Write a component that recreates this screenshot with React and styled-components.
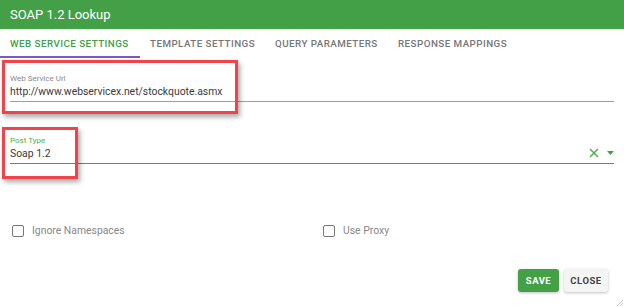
import React from "react";
import styled, { createGlobalStyle } from "styled-components";

const GlobalStyle = createGlobalStyle`
  body {
    margin: 0;
    background: #fff;
    font-family: Roboto, "Noto Sans", Arial, sans-serif;
  }
`;

const Dialog = styled.div`
  width: 624px;
  height: 307px;
  position: relative;
  display: flex;
  flex-direction: column;
  background: #fff;
  overflow: hidden;
`;

const Header = styled.div`
  height: 29px;
  background: #43a047;
  color: #fff;
  font-size: 13px;
  display: flex;
  align-items: center;
  padding: 0 10px;
  border-bottom: 1px solid #e8f3e8;
`;

const Tabs = styled.div`
  height: 28px;
  display: flex;
`;

const Tab = styled.div`
  font-size: 9.8px;
  font-weight: 500;
  letter-spacing: 0.45px;
  white-space: nowrap;
  text-transform: uppercase;
  color: ${(p) => (p.active ? "#43a047" : "#777")};
  padding-left: 10px;
  display: flex;
  align-items: center;
  width: ${(p) => p.w}px;
  box-sizing: border-box;
  border-bottom: 2px solid ${(p) => (p.active ? "#7e57c2" : "transparent")};
`;

const Form = styled.div`
  padding: 0 10px;
  display: flex;
  flex-direction: column;
`;

const Field = styled.div`
  display: flex;
  flex-direction: column;
  margin-top: ${(p) => p.top}px;
  border-bottom: 1px solid ${(p) => (p.focused ? "#43a047" : "#9e9e9e")};
  height: ${(p) => p.h}px;
  position: relative;
`;

const Label = styled.div`
  font-size: 8px;
  color: ${(p) => (p.focused ? "#4caf50" : "#8a8a8a")};
  line-height: 10px;
`;

const Value = styled.div`
  font-size: 10.4px;
  color: #3a3a3a;
  margin-top: 1px;
  line-height: 14px;
`;

const Adorn = styled.div`
  position: absolute;
  right: 0;
  bottom: 5px;
  display: flex;
  align-items: center;
  gap: 8px;
`;

const Checks = styled.div`
  display: flex;
  margin-top: 60px;
  padding-left: 2px;
`;

const CheckItem = styled.label`
  display: flex;
  align-items: center;
  gap: 8px;
  width: ${(p) => p.w}px;
  font-size: 10.4px;
  color: #888;
`;

const Box = styled.span`
  width: 10px;
  height: 10px;
  border: 1.3px solid #777;
  border-radius: 2px;
`;

const Actions = styled.div`
  display: flex;
  justify-content: flex-end;
  gap: 5px;
  padding-right: 16px;
  margin-top: 32px;
`;

const Button = styled.button`
  height: 23px;
  width: ${(p) => p.w}px;
  padding: 0;
  border: none;
  border-radius: 3px;
  font-family: inherit;
  font-size: 9.5px;
  font-weight: 700;
  letter-spacing: 0.5px;
  background: ${(p) => (p.primary ? "#43a047" : "#f4f4f4")};
  color: ${(p) => (p.primary ? "#fff" : "#444")};
  box-shadow: 0 1px 3px rgba(0, 0, 0, 0.25);
`;

const Callout = styled.div`
  position: absolute;
  border: 3px solid #f0444c;
  box-shadow: 2px 3px 5px rgba(0, 0, 0, 0.35);
  box-sizing: border-box;
  pointer-events: none;
`;

const Grip = styled.svg`
  position: absolute;
  right: 1px;
  bottom: 1px;
`;

export default function App() {
  return (
    <>
      <GlobalStyle />
      <Dialog>
        <Header>SOAP 1.2 Lookup</Header>
        <Tabs>
          <Tab active w={140}>Web Service Settings</Tab>
          <Tab w={125}>Template Settings</Tab>
          <Tab w={123}>Query Parameters</Tab>
          <Tab w={140}>Response Mappings</Tab>
        </Tabs>
        <Form>
          <Field top={16} h={27}>
            <Label>Web Service Url</Label>
            <Value>http://www.webservicex.net/stockquote.asmx</Value>
          </Field>
          <Field top={34} h={27} focused>
            <Label focused>Post Type</Label>
            <Value>Soap 1.2</Value>
            <Adorn>
              <svg width="10" height="10" viewBox="0 0 10 10">
                <path d="M1 1 L9 9 M9 1 L1 9" stroke="#4caf50" strokeWidth="1.5" />
              </svg>
              <svg width="7" height="4" viewBox="0 0 7 4">
                <path d="M0 0 H7 L3.5 4 Z" fill="#43a047" />
              </svg>
            </Adorn>
          </Field>
          <Checks>
            <CheckItem w={311}>
              <Box />
              Ignore Namespaces
            </CheckItem>
            <CheckItem w={200}>
              <Box />
              Use Proxy
            </CheckItem>
          </Checks>
        </Form>
        <Actions>
          <Button primary w={41}>SAVE</Button>
          <Button w={44}>CLOSE</Button>
        </Actions>
        <Callout style={{ left: 2, top: 60, width: 236, height: 54 }} />
        <Callout style={{ left: 2, top: 127, width: 76, height: 52 }} />
        <Grip width="8" height="8" viewBox="0 0 8 8">
          <path d="M8 2 L2 8 M8 5 L5 8" stroke="#ccc" strokeWidth="1" />
        </Grip>
      </Dialog>
    </>
  );
}
